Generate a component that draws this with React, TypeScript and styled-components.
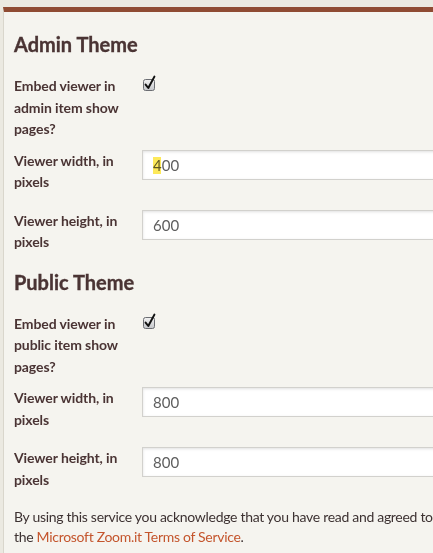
import React from 'react';
import styled, { createGlobalStyle } from 'styled-components';

const GlobalStyle = createGlobalStyle`
	html, body {
		margin: 0;
		padding: 0;
		background: #ebe9e1;
		overflow: hidden;
	}
	body {
		font-family: Lato, 'Liberation Sans', sans-serif;
	}
`;

const Page = styled.div`
	padding: 7px 0 0 3px;
	min-height: 553px;
	box-sizing: border-box;
`;

const Panel = styled.div`
	background: #f5f4ef;
	border-top: 5px solid #8f4b33;
	border-left: 1px solid #d9d6cc;
	padding: 20px 0 30px 10px;
	min-height: 540px;
	box-sizing: border-box;
`;

const Heading = styled.h2`
	margin: 0 0 19px;
	font-size: 20px;
	line-height: 24px;
	font-weight: 700;
	color: #4a3434;
	-webkit-text-stroke: 0.35px #4a3434;
`;

const Row = styled.div<{ $spacing: number }>`
	display: flex;
	align-items: flex-start;
	margin-bottom: ${(p) => p.$spacing}px;
`;

const Label = styled.label`
	flex: 0 0 128px;
	width: 128px;
	font-size: 14px;
	line-height: 21.5px;
	font-weight: 700;
	color: #4a3434;
	letter-spacing: -0.1px;
`;

const InputWrap = styled.div`
	position: relative;
	flex: 0 0 auto;
`;

const TextInput = styled.input`
	display: block;
	width: 330px;
	height: 30px;
	box-sizing: border-box;
	border: 1px solid #d2d1cd;
	border-radius: 0;
	background: #fff;
	box-shadow: inset 0 1px 3px rgba(0, 0, 0, 0.12);
	padding: 0 10px;
	font-family: Lato, 'Liberation Sans', sans-serif;
	font-size: 15px;
	color: #5e5e5e;
	outline: none;
`;

const Highlight = styled.span`
	position: absolute;
	left: 11px;
	top: 7px;
	width: 8px;
	height: 17px;
	background: #fde95a;
	mix-blend-mode: multiply;
	pointer-events: none;
`;

const CheckWrap = styled.span`
	display: block;
	width: 16px;
	height: 17px;
`;

const Notice = styled.p`
	margin: 0;
	font-size: 14px;
	line-height: 20px;
	color: #3d3232;
	letter-spacing: -0.3px;
	white-space: nowrap;
	a {
		color: #c4552d;
		text-decoration: none;
	}
`;

const CheckBox = () => (
	<CheckWrap>
		<svg width="16" height="17" viewBox="0 0 16 17">
			<defs>
				<linearGradient id="cbg" x1="0" y1="0" x2="0" y2="1">
					<stop offset="0" stopColor="#f2f2f2" />
					<stop offset="1" stopColor="#c4c6ca" />
				</linearGradient>
			</defs>
			<rect x="1.5" y="4.5" width="11" height="11" rx="2" fill="url(#cbg)" stroke="#6b6d72" />
			<path d="M3.6 9.6 L6.3 13 L12.4 1.6" fill="none" stroke="#111" strokeWidth="2" strokeLinecap="round" strokeLinejoin="round" />
		</svg>
	</CheckWrap>
);

interface FieldProps {
	label: string;
	value: string;
	mark?: boolean;
	spacing?: number;
}

const TextField = ({ label, value, mark, spacing = 17 }: FieldProps) => (
	<Row $spacing={spacing}>
		<Label>{label}</Label>
		<InputWrap>
			<TextInput type="text" defaultValue={value} />
			{mark && <Highlight />}
		</InputWrap>
	</Row>
);

const ThemeSection = ({ name, scope, width, height, mark }: { name: string; scope: string; width: string; height: string; mark?: boolean }) => (
	<section>
		<Heading>{name} Theme</Heading>
		<Row $spacing={10}>
			<Label>Embed viewer in {scope} item show pages?</Label>
			<CheckBox />
		</Row>
		<TextField label="Viewer width, in pixels" value={width} mark={mark} />
		<TextField label="Viewer height, in pixels" value={height} />
	</section>
);

export default function App() {
	return (
		<Page>
			<GlobalStyle />
			<Panel>
				<ThemeSection name="Admin" scope="admin" width="400" height="600" mark />
				<ThemeSection name="Public" scope="public" width="800" height="800" />
				<Notice>
					By using this service you acknowledge that you have read and agreed to
					<br />
					the <a href="#">Microsoft Zoom.it Terms of Service</a>.
				</Notice>
			</Panel>
		</Page>
	);
}
